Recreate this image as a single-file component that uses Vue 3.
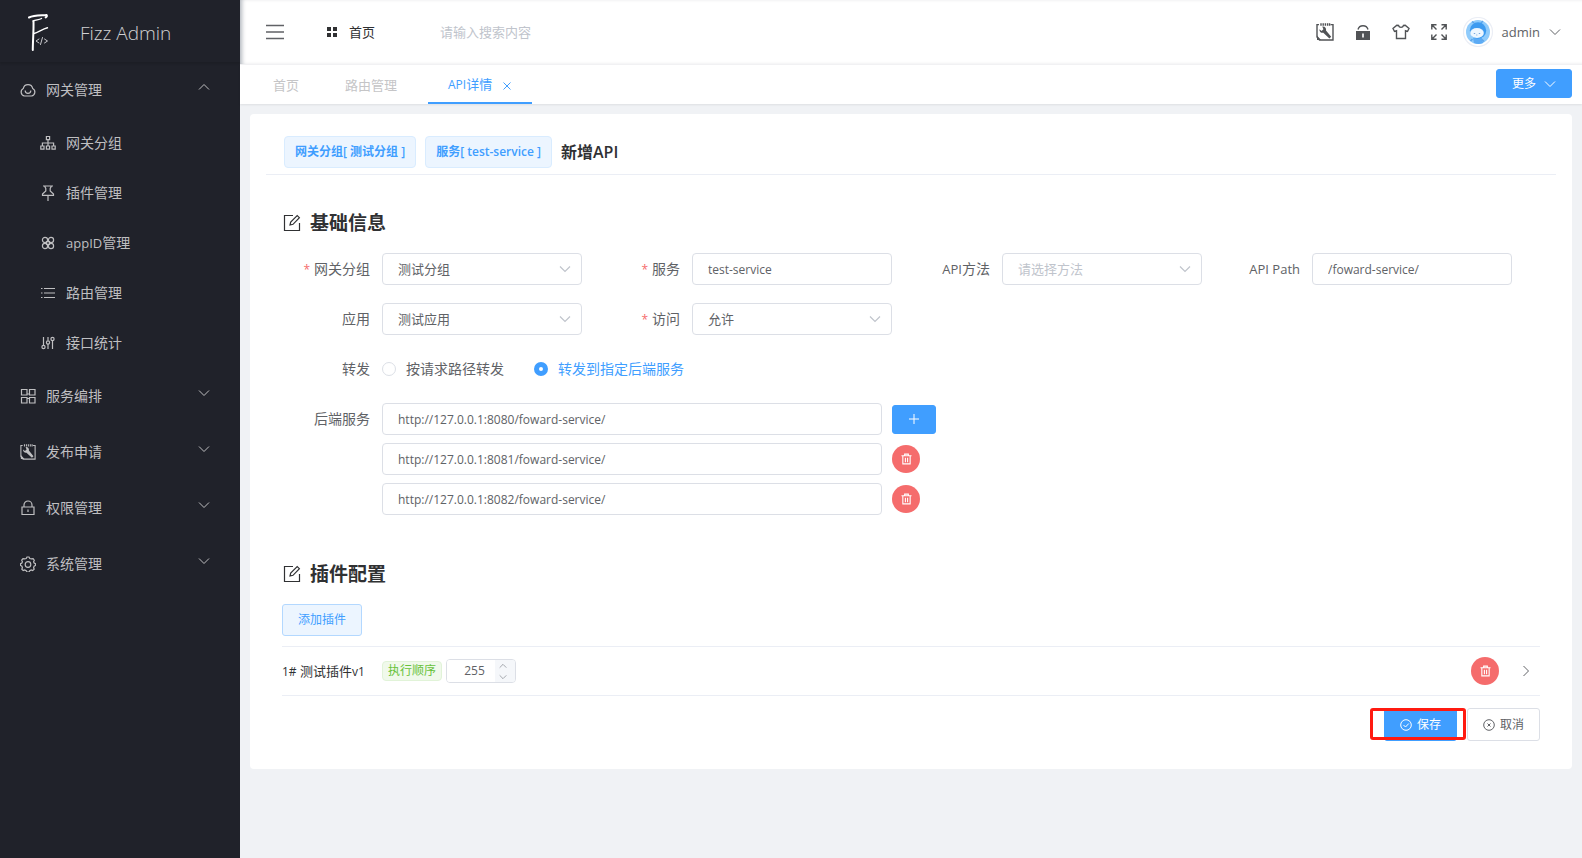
<script setup>
import { ref } from 'vue'

const subMenu = [
  { icon: 'tree', latin: '', text: '网关分组' },
  { icon: 'pin', latin: '', text: '插件管理' },
  { icon: 'command', latin: 'appID', text: '管理' },
  { icon: 'list', latin: '', text: '路由管理' },
  { icon: 'sliders', latin: '', text: '接口统计' },
]
const groups = [
  { icon: 'cells', text: '服务编排' },
  { icon: 'tool', text: '发布申请' },
  { icon: 'lock', text: '权限管理' },
  { icon: 'gear', text: '系统管理' },
]
const search = ref('')
const gateway = ref('测试分组')
const service = ref('test-service')
const method = ref('')
const path = ref('/foward-service/')
const application = ref('测试应用')
const access = ref('允许')
const forward = ref('backend')
const order = ref(255)
const backends = ref([
  'http://127.0.0.1:8080/foward-service/',
  'http://127.0.0.1:8081/foward-service/',
  'http://127.0.0.1:8082/foward-service/',
])
</script>

<template>
  <svg class="defs" aria-hidden="true">
    <symbol id="i-cloud" viewBox="0 0 16 16">
      <path d="M3.300 6.500A4.800 4.800 0 0 1 12.700 6.500A4 4 0 0 1 11.500 14H4.500A4 4 0 0 1 3.300 6.500z" />
      <path d="M5.200 8.500a2.800 2.800 0 0 0 5.600 0" />
    </symbol>
    <symbol id="i-tree" viewBox="0 0 16 16">
      <path d="M6.400 1.500h3.200v3.200H6.400zM.8 11h3.200v3.200H.8zM6.400 11h3.200v3.200H6.400zM12 11h3.200v3.200H12zM8 4.700V11M2.400 11V8h11.200v3" />
    </symbol>
    <symbol id="i-pin" viewBox="0 0 16 16">
      <path d="M3 1h10M4.500 1L5.800 3.500V6L2.500 9v1.300h11V9L10.200 6V3.500L11.500 1M8 10.300V16" />
    </symbol>
    <symbol id="i-command" viewBox="0 0 16 16">
      <circle cx="5" cy="5" r="2.600" /><circle cx="11" cy="5" r="2.600" />
      <circle cx="5" cy="11" r="2.600" /><circle cx="11" cy="11" r="2.600" />
      <path d="M6.500 6.500h3v3h-3z" />
    </symbol>
    <symbol id="i-list" viewBox="0 0 16 16">
      <path d="M1 3.500h1.500M4 3.500h11M1 8h1.500M4 8h11M1 12.500h1.500M4 12.500h11" />
    </symbol>
    <symbol id="i-sliders" viewBox="0 0 16 16">
      <path d="M3.500 2v8M8 2v3.500M8 9v5M12.500 6v8" />
      <circle cx="3.500" cy="12" r="1.600" /><circle cx="8" cy="7.500" r="1.600" /><circle cx="12.500" cy="4" r="1.600" />
    </symbol>
    <symbol id="i-cells" viewBox="0 0 16 16">
      <path d="M1.500 1.500h5.500v5.500H1.500zM9.500 1.500H15v5.500H9.500zM1.500 9.500h5.500V15H1.500zM9.500 9.500H15V15H9.500zM7 6h2.500M7 10.500h2.500" />
    </symbol>
    <symbol id="i-tool" viewBox="0 0 18 18">
      <path d="M3 1.600H1v12.500L3.500 17h13.500V1.600h-2.500" />
      <path d="M5 .3v2.400M7.200.3v2.400M9.400.3v2.400M11.600.3v2.400M13.600.3v2.400" />
      <path class="solid" d="M1 12.500l4 4.500H1z" />
      <path class="solid" d="M6.300 3.500c2.500-.4 4.300 1.600 3.700 3.900l5.200 6.300-1.800 1.700-6.100-5.600c-2.100.4-4.100-1.200-3.900-3.600l2.200 1.700 1.800-1.600z" />
    </symbol>
    <symbol id="i-lock" viewBox="0 0 16 16">
      <path d="M2 7h12v7.500H2zM4 7V5a4 4 0 0 1 8 0v2M8 9.500v2.500" />
    </symbol>
    <symbol id="i-gear" viewBox="0 0 16 16">
      <path d="M6.200 2.500L7 1h2l.8 1.500 1.700.4 1.600-.3 1.200 1.600-.7 1.500.5 1.300 1.400.7v1.700l-1.400.8-.5 1.500.6 1.500-1.500 1.300-1.500-.5-1.400.7L9 16H7l-.8-1.300-1.500-.7-1.500.5-1.400-1.300.6-1.500-.5-1.500L.5 9.400V7.700L1.900 7l.5-1.300-.7-1.500 1.300-1.600 1.500.3z" />
      <circle cx="8" cy="8.500" r="2.800" />
    </symbol>
    <symbol id="i-down" viewBox="0 0 12 12"><path d="M1 3.500l5 5 5-5" /></symbol>
    <symbol id="i-up" viewBox="0 0 12 12"><path d="M1 8.500l5-5 5 5" /></symbol>
    <symbol id="i-right" viewBox="0 0 12 12"><path d="M3.500 1l5 5-5 5" /></symbol>
    <symbol id="i-close" viewBox="0 0 12 12"><path d="M2.500 2.500l7 7M9.500 2.500l-7 7" /></symbol>
    <symbol id="i-plus" viewBox="0 0 12 12"><path d="M6 1v10M1 6h10" /></symbol>
    <symbol id="i-menu" viewBox="0 0 20 16"><path d="M1 1.500h18M1 8h18M1 14.500h18" /></symbol>
    <symbol id="i-shirt" viewBox="0 0 18 16">
      <path d="M6.500 1.500a2.600 2.600 0 0 0 5 0l1.700-.2L17 4.500l-1.500 3-2-.7v7.700h-9V6.800l-2 .7L1 4.500l3.800-3.200z" />
    </symbol>
    <symbol id="i-full" viewBox="0 0 18 18">
      <path d="M6.500 1.800H1.800v4.700M1.800 1.800l4.700 4.700M11.500 1.800h4.700v4.700M16.200 1.800l-4.700 4.700M6.500 16.200H1.800v-4.700M1.800 16.200l4.700-4.700M11.500 16.200h4.700v-4.700M16.200 16.200l-4.700-4.700" />
    </symbol>
    <symbol id="i-edit" viewBox="0 0 18 18">
      <path d="M10 1.500H1.500v15h15V9M7 11l.7-3L14.200 1.500l2.200 2.200L10 10.300z" />
    </symbol>
    <symbol id="i-trash" viewBox="0 0 12 12">
      <path d="M.5 2.500h11M4 2.500V.7h4v1.800M2 2.500v8.800h8V2.500M4.800 4.500v5M7.200 4.500v5" />
    </symbol>
    <symbol id="i-ok" viewBox="0 0 12 12"><circle cx="6" cy="6" r="5.300" /><path d="M3.500 6l2 2 3.300-3.500" /></symbol>
    <symbol id="i-no" viewBox="0 0 12 12"><circle cx="6" cy="6" r="5.300" /><path d="M4.500 4.500l3 3M7.500 4.500l-3 3" /></symbol>
  </svg>

  <div class="app">
    <aside class="side">
      <div class="brand">
        <svg class="logo" viewBox="0 0 22 40">
          <path class="cap" d="M1 4.500C6 2 13 2.500 18.500 2c.8.800.2 1.800-.8 2.500" />
          <path class="stem" d="M5.500 8.500C5.800 17 4.800 28 4.800 37" />
          <path d="M5 8c3-1.500 6-.8 8.500-2.500M6 20.500C10 20 14 16 19.500 14.800" />
          <path class="thin" d="M11 26l-3 2 3 2M14.500 24.500l-2 7M16.500 26l3 2-3 2" />
        </svg>
        <span>Fizz Admin</span>
      </div>
      <nav>
        <a class="group" href="#">
          <svg class="ic"><use href="#i-cloud" /></svg><span>网关管理</span>
          <svg class="arrow"><use href="#i-up" /></svg>
        </a>
        <a v-for="m in subMenu" :key="m.icon" class="sub" href="#">
          <svg class="ic"><use :href="'#i-' + m.icon" /></svg>
          <span><span class="lat">{{ m.latin }}</span>{{ m.text }}</span>
        </a>
        <a v-for="g in groups" :key="g.icon" class="group" href="#">
          <svg class="ic"><use :href="'#i-' + g.icon" /></svg><span>{{ g.text }}</span>
          <svg class="arrow"><use href="#i-down" /></svg>
        </a>
      </nav>
    </aside>

    <div class="main">
      <header class="top">
        <button class="icon-btn menu" aria-label="折叠菜单"><svg><use href="#i-menu" /></svg></button>
        <a class="home" href="#">
          <svg viewBox="0 0 10 10"><path d="M0 0h4v4H0zM6 0h4v4H6zM0 6h4v4H0zM6 6h4v4H6z" /></svg>首页
        </a>
        <input v-model="search" class="search" type="text" aria-label="搜索" placeholder="请输入搜索内容" />
        <div class="tools">
          <button class="icon-btn" aria-label="工具"><svg><use href="#i-tool" /></svg></button>
          <button class="icon-btn" aria-label="锁屏">
            <svg viewBox="0 0 18 18"><path d="M4 6.500a5.200 5.200 0 0 1 10 0" /><path class="solid" fill-rule="evenodd" d="M2 8h14v9H2zM8.200 10.500v4h1.600v-4z" /></svg>
          </button>
          <button class="icon-btn" aria-label="主题"><svg><use href="#i-shirt" /></svg></button>
          <button class="icon-btn" aria-label="全屏"><svg><use href="#i-full" /></svg></button>
          <button class="user">
            <svg class="avatar" viewBox="0 0 30 30">
              <circle class="ring" cx="15" cy="15" r="14.500" />
              <circle class="sky" cx="15" cy="15" r="12" />
              <path class="body" d="M10 21h9l1 5a12 12 0 0 1-9 0z" />
              <path class="limb" d="M9.500 22l-2 2M19 22.500l2 2M11 6L9 4.500M18 6l2-2" />
              <circle class="hood" cx="15" cy="13.500" r="8.200" />
              <ellipse class="face" cx="14" cy="16" rx="6.800" ry="5" />
              <path class="eyes" d="M10.800 16.500h1.400M15.800 16.500h1.400M13.300 18h1" />
            </svg>
            <span>admin</span>
            <svg class="chev"><use href="#i-down" /></svg>
          </button>
        </div>
      </header>

      <div class="tabs">
        <a class="tab" href="#">首页</a>
        <a class="tab wide" href="#">路由管理</a>
        <a class="tab active" href="#"><span><span class="lat">API</span>详情</span><svg><use href="#i-close" /></svg></a>
        <button class="btn primary more">更多 <svg><use href="#i-down" /></svg></button>
      </div>

      <main class="card">
        <div class="crumbs">
          <span class="tag">网关分组[ 测试分组 ]</span>
          <span class="tag">服务[ <span class="lat">test-service</span> ]</span>
          <h1>新增API</h1>
        </div>

        <section>
          <h2><svg><use href="#i-edit" /></svg>基础信息</h2>
          <div class="fields">
            <div class="field">
              <label for="gateway" class="req">网关分组</label>
              <span class="select"><select id="gateway" v-model="gateway"><option>测试分组</option></select><svg><use href="#i-down" /></svg></span>
            </div>
            <div class="field">
              <label for="service" class="req">服务</label>
              <input id="service" v-model="service" class="text" type="text" />
            </div>
            <div class="field">
              <label for="method"><span class="lat">API</span>方法</label>
              <span class="select empty"><select id="method" v-model="method"><option value="">请选择方法</option></select><svg><use href="#i-down" /></svg></span>
            </div>
            <div class="field">
              <label for="path"><span class="lat">API Path</span></label>
              <input id="path" v-model="path" class="text" type="text" />
            </div>
            <div class="field">
              <label for="application">应用</label>
              <span class="select"><select id="application" v-model="application"><option>测试应用</option></select><svg><use href="#i-down" /></svg></span>
            </div>
            <div class="field">
              <label for="access" class="req">访问</label>
              <span class="select"><select id="access" v-model="access"><option>允许</option></select><svg><use href="#i-down" /></svg></span>
            </div>
          </div>

          <div class="line" role="radiogroup" aria-labelledby="forward-label">
            <span id="forward-label" class="label">转发</span>
            <label class="radio"><input v-model="forward" type="radio" name="forward" value="path" /><span>按请求路径转发</span></label>
            <label class="radio"><input v-model="forward" type="radio" name="forward" value="backend" /><span>转发到指定后端服务</span></label>
          </div>

          <div class="line top-line">
            <label class="label" for="backend-0">后端服务</label>
            <div class="backends">
              <div v-for="(b, i) in backends" :key="i" class="backend">
                <input :id="'backend-' + i" v-model="backends[i]" class="text" type="text" :aria-label="'后端服务 ' + (i + 1)" />
                <button v-if="i === 0" class="btn primary add" aria-label="添加"><svg><use href="#i-plus" /></svg></button>
                <button v-else class="del" aria-label="删除"><svg><use href="#i-trash" /></svg></button>
              </div>
            </div>
          </div>
        </section>

        <section class="plugins">
          <h2><svg><use href="#i-edit" /></svg>插件配置</h2>
          <button class="btn plain">添加插件</button>
          <div class="plugin">
            <span class="name"><span class="lat">1#</span> 测试插件<span class="lat">v1</span></span>
            <label class="order" for="order">执行顺序</label>
            <span class="number">
              <input id="order" v-model="order" type="text" inputmode="numeric" />
              <span class="steps">
                <button aria-label="增加" @click="order++"><svg><use href="#i-up" /></svg></button>
                <button aria-label="减少" @click="order--"><svg><use href="#i-down" /></svg></button>
              </span>
            </span>
            <button class="del" aria-label="删除"><svg><use href="#i-trash" /></svg></button>
            <button class="expand" aria-label="展开"><svg><use href="#i-right" /></svg></button>
          </div>
          <div class="actions">
            <span class="marked"><button class="btn primary"><svg><use href="#i-ok" /></svg>保存</button></span>
            <button class="btn"><svg><use href="#i-no" /></svg>取消</button>
          </div>
        </section>
      </main>
    </div>
  </div>
</template>

<style>
body { background: #f0f2f5; }
</style>

<style scoped>
* { box-sizing: border-box; }
.defs { position: absolute; width: 0; height: 0; }
svg { fill: none; stroke: currentColor; stroke-width: 1.2; flex: none; display: block; }
.solid { fill: currentColor; stroke: none; }
a { color: inherit; text-decoration: none; }
button, input, select { font: inherit; color: inherit; margin: 0; }
button { cursor: pointer; }

.app {
  display: flex; min-height: 100vh; color: #606266; background: #f0f2f5;
  font: 14px/20px "Open Sans", "Noto Sans CJK SC", sans-serif;
}
.lat { font-size: 13px; }

.side { width: 240px; flex: none; background: #20222a; color: #bfbfc1; }
.brand {
  display: flex; align-items: center; height: 62px; padding: 4px 0 0 28px; gap: 30px;
  font-size: 19px; font-weight: 300; color: #d2d2d4; box-shadow: 0 2px 2px rgba(0, 0, 0, .12);
}
.logo { width: 22px; height: 40px; stroke: #fff; stroke-width: 1.400; stroke-linecap: round; }
.logo .stem, .logo .cap { stroke-width: 2; }
.logo .thin { stroke-width: 1; stroke: #c8c8cc; }
.group, .sub { display: flex; align-items: center; gap: 10px; }
.group { height: 56px; padding: 0 30px 0 20px; }
.sub { height: 50px; padding-left: 40px; }
.ic { width: 16px; height: 16px; }
.arrow { width: 12px; height: 12px; margin: 0 0 6px auto; stroke-width: 1; }

.main { flex: 1; min-width: 0; }
.top {
  display: flex; align-items: center; height: 65px; padding: 0 21px 0 25px;
  background: #fff; border-bottom: 1px solid #f2f2f4; box-shadow: inset 4px 0 4px -2px rgba(0, 21, 41, .3);
}
.icon-btn, .user, .expand { border: 0; padding: 0; background: none; display: flex; align-items: center; }
.menu svg { width: 20px; height: 16px; stroke-width: 1.500; }
.home { display: flex; align-items: center; gap: 12px; margin-left: 42px; font-size: 13px; color: #303133; }
.home svg { width: 10px; height: 10px; fill: currentColor; stroke: none; }
.search { flex: 1; min-width: 0; margin-left: 65px; padding: 0; border: 0; outline: 0; font-size: 13px; background: none; }
.search::placeholder { color: #c0c4cc; opacity: 1; }
.tools { display: flex; align-items: center; gap: 20px; color: #515356; }
.tools .icon-btn svg { width: 18px; height: 18px; stroke-width: 1.400; }
.user { gap: 9px; font-size: 13px; color: #606266; margin-left: -5px; }
.user .avatar { width: 30px; height: 30px; }
.ring { fill: #fff; stroke: #ebeef5; }
.sky { fill: #8fcbfb; stroke: none; }
.hood { fill: #3d9bf0; stroke: none; }
.body { fill: #5cabf5; stroke: none; }
.limb { stroke: #5ca5ea; stroke-width: 1.500; }
.face { fill: #eef7ff; stroke: none; }
.eyes { stroke: #7aa9dc; stroke-width: 1; }
.user .chev { width: 12px; height: 12px; stroke-width: 1; }

.tabs {
  display: flex; height: 39px; padding: 0 10px 0 13px; background: #fff; font-size: 13px; color: #c5c5c7;
  box-shadow: 0 1px 2px rgba(0, 0, 0, .08); align-items: stretch;
}
.tab { display: flex; align-items: center; padding: 0 26px 0 20px; }
.tab.wide { padding-right: 31px; }
.tab.active { padding: 2px 19px 0 20px; gap: 9px; color: #409eff; border-bottom: 2px solid #409eff; }
.tab .lat { font-size: 12px; }
.tab svg { width: 12px; height: 12px; stroke-width: 1; margin-top: 3px; }

.btn {
  display: inline-flex; align-items: center; justify-content: center; gap: 5px; height: 33px; padding: 0 15px;
  border: 1px solid #dcdfe6; border-radius: 3px; background: #fff; font-size: 12px; line-height: 12px;
}
.btn svg { width: 12px; height: 12px; stroke-width: 1; }
.btn.primary { background: #409eff; border-color: #409eff; color: #fff; }
.btn.plain { height: 32px; background: #ecf5ff; border-color: #b3d8ff; color: #409eff; }
.btn.more { height: 29px; margin: 4px 0 0 auto; gap: 8px; }
.btn.add { width: 44px; height: 29px; }

.card { margin: 10px; padding: 22px 32px 28px; background: #fff; border-radius: 4px; }
.crumbs {
  display: flex; align-items: center; gap: 9px; padding: 0 18px 6px; margin: 0 -16px; border-bottom: 1px solid #ebeef5;
}
.tag {
  height: 32px; padding: 0 10px; line-height: 30px; font-size: 12px; font-weight: 600; color: #409eff;
  background: #ecf5ff; border: 1px solid #d9ecff; border-radius: 4px;
}
.tag .lat { font-size: 12px; }
h1 { margin: 0; font-size: 16px; font-weight: 600; line-height: 28px; color: #303133; }
h2 { display: flex; align-items: center; gap: 9px; margin: 0 0 17px; font-size: 19px; line-height: 26px; color: #303133; }
h2 svg { width: 18px; height: 18px; margin-left: 1px; }
section { padding-top: 35px; }
.plugins { padding-top: 46px; }

.fields { display: flex; flex-wrap: wrap; row-gap: 18px; }
.field { display: flex; align-items: center; width: 310px; }
.field label, .label { width: 88px; margin-right: 12px; text-align: right; flex: none; }
.req::before { content: "*"; color: #f56c6c; margin-right: 4px; font-size: 12px; }
.text, select {
  width: 200px; height: 32px; padding: 0 15px; border: 1px solid #dcdfe6; border-radius: 4px; background: #fff; outline: 0;
}
.text { font-size: 12px; }
select { appearance: none; font-size: 13px; }
.select { position: relative; }
.select svg { position: absolute; right: 11px; top: 10px; width: 12px; height: 12px; color: #c0c4cc; pointer-events: none; }
.select.empty select { color: #c0c4cc; }

.line { display: flex; align-items: center; min-height: 32px; margin-top: 18px; }
.top-line { align-items: flex-start; }
.top-line .label { line-height: 32px; }
.radio { display: flex; align-items: center; gap: 10px; margin-right: 30px; }
.radio input { appearance: none; width: 14px; height: 14px; border: 1px solid #dcdfe6; border-radius: 50%; background: #fff; }
.radio input:checked { border: 5px solid #409eff; }
.radio input:checked + span { color: #409eff; }
.backends { display: grid; gap: 8px; }
.backend { display: flex; align-items: center; gap: 10px; }
.backend .text { width: 500px; }
.del {
  display: flex; align-items: center; justify-content: center; width: 28px; height: 28px; padding: 0; border: 0;
  border-radius: 50%; background: #f56c6c; color: #fff;
}
.del svg { width: 11px; height: 12px; stroke-width: 1.200; }

.plugin {
  display: flex; align-items: center; height: 50px; margin-top: 10px;
  border-top: 1px solid #ebeef5; border-bottom: 1px solid #ebeef5;
}
.name { width: 100px; font-size: 13px; color: #303133; white-space: nowrap; }
.name .lat { font-size: 12px; }
.order {
  height: 20px; padding: 0 5px; margin-right: 4px; line-height: 18px; font-size: 12px; color: #67c23a;
  background: #f0f9eb; border: 1px solid #e1f3d8; border-radius: 4px;
}
.number { display: flex; width: 70px; height: 24px; border: 1px solid #dcdfe6; border-radius: 4px; overflow: hidden; }
.number input { flex: 1; min-width: 0; padding: 0 0 0 7px; border: 0; outline: 0; text-align: center; font-size: 12px; }
.steps { display: flex; flex-direction: column; width: 20px; background: #f5f7fa; }
.steps button { flex: 1; display: flex; align-items: center; padding: 0 0 0 4px; border: 0; background: none; color: #909399; }
.steps svg { width: 8px; height: 8px; }
.plugin .del { margin-left: auto; }
.expand { margin: 0 8px 0 21px; }
.expand svg { width: 12px; height: 12px; stroke-width: 1; }

.actions { display: flex; justify-content: flex-end; gap: 10px; margin-top: 12px; }
.marked { position: relative; }
.marked::after {
  content: ""; position: absolute; top: 0; right: -9px; bottom: 1px; left: -14px;
  border: 3px solid #ff1a10; border-radius: 3px; pointer-events: none;
}
</style>
